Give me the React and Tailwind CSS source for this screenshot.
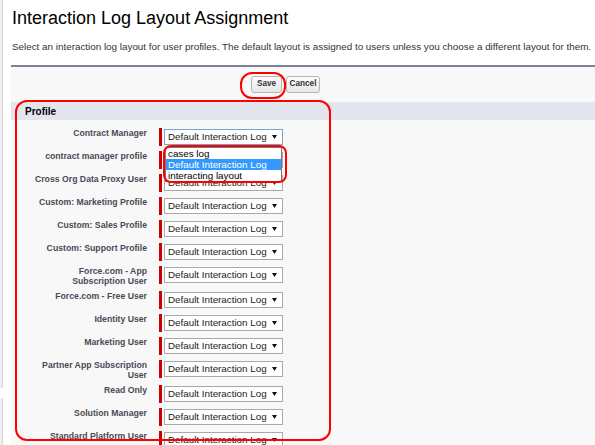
const rows = [
  "Contract Manager",
  "contract manager profile",
  "Cross Org Data Proxy User",
  "Custom: Marketing Profile",
  "Custom: Sales Profile",
  "Custom: Support Profile",
  "Force.com - App Subscription User",
  "Force.com - Free User",
  "Identity User",
  "Marketing User",
  "Partner App Subscription User",
  "Read Only",
  "Solution Manager",
  "Standard Platform User",
];

function Select({ focused }) {
  return (
    <div
      className={
        focused
          ? "w-[119px] h-[16px] bg-white border border-[#7da2ce] flex items-center pl-[3px] pr-[5px] text-[9.8px] text-[#222] leading-none"
          : "w-[119px] h-[16px] bg-white border border-[#a9a9a9] flex items-center pl-[3px] pr-[5px] text-[9.8px] text-[#222] leading-none"
      }
    >
      <span className="flex-1 whitespace-nowrap">Default Interaction Log</span>
      <svg width="5" height="4" viewBox="0 0 5 4">
        <path d="M0 0H5L2.5 4Z" fill="#111" />
      </svg>
    </div>
  );
}

function Row({ label, first }) {
  return (
    <div className="flex items-start pt-[3px] pb-[2px]">
      <div className="w-[116px] ml-[20px] text-right font-bold text-[8.7px] leading-[10px] text-[#4a4a56]">
        {label}
      </div>
      <div className="ml-[12px] flex items-center">
        <div className="w-[3px] h-[18px] bg-[#cc0000]" />
        <div className="ml-[2px]">
          <Select focused={first} />
        </div>
      </div>
    </div>
  );
}

export default function App() {
  return (
    <div className="relative w-[595px] h-[445px] overflow-hidden bg-white font-['Liberation_Sans',Arial,sans-serif] flex">
      <div className="w-[3px] flex flex-col shrink-0">
        <div className="h-[388px] bg-[#efefef] border-r border-[#d9d9d9]" />
        <div className="h-[10px]" />
        <div className="flex-1 bg-[#efefef] border-r border-[#d9d9d9]" />
      </div>
      <div className="flex-1 pl-[8px] min-w-0">
        <h1 className="pt-[9px] pl-[1px] text-[18px] leading-[18px] text-black whitespace-nowrap">
          Interaction Log Layout Assignment
        </h1>
        <p className="mt-[14px] pl-[1px] text-[9.85px] leading-[12px] text-[#333] whitespace-nowrap">
          Select an interaction log layout for user profiles. The default layout is assigned to users unless you choose a different layout for them.
        </p>
        <div className="mt-[12px] border-t-2 border-[#7b8397] bg-[#f8f8f8] h-[400px]">
          <div className="pt-[9px] pl-[240px] flex gap-[4px]">
            <button className="w-[31px] h-[17px] rounded-[3px] border border-[#b5b5b5] bg-linear-to-b from-[#fdfdfd] to-[#e6e6e6] text-[8.2px] font-bold text-[#333]">
              Save
            </button>
            <button className="w-[34px] h-[17px] rounded-[3px] border border-[#b5b5b5] bg-linear-to-b from-[#fdfdfd] to-[#e6e6e6] text-[8.2px] font-bold text-[#333]">
              Cancel
            </button>
          </div>
          <div className="mt-[9px] h-[18px] bg-[#e3e6ee] pl-[14px] flex items-center text-[10px] font-bold text-black">
            Profile
          </div>
          <div className="mt-[5px]">
            {rows.map((r, i) => (
              <Row key={r} label={r} first={i === 0} />
            ))}
          </div>
        </div>
      </div>

      <div className="absolute left-[240px] top-[72px] w-[46px] h-[27px] border-2 border-[#ff0000] rounded-[12px]" />
      <div className="absolute left-[15px] top-[100px] w-[316px] h-[341px] border-2 border-[#ff0000] rounded-[12px]" />
      <div className="absolute left-[165px] top-[147px] w-[117px] border border-[#7a7a7a] bg-white text-[9.8px] leading-[11px] text-black">
        <div className="pl-[2px]">cases log</div>
        <div className="pl-[2px] bg-[#3399ff] text-white">Default Interaction Log</div>
        <div className="pl-[2px]">interacting layout</div>
      </div>
      <div className="absolute left-[163px] top-[145px] w-[124px] h-[38px] border-2 border-[#ff0000] rounded-[8px]" />
    </div>
  );
}
